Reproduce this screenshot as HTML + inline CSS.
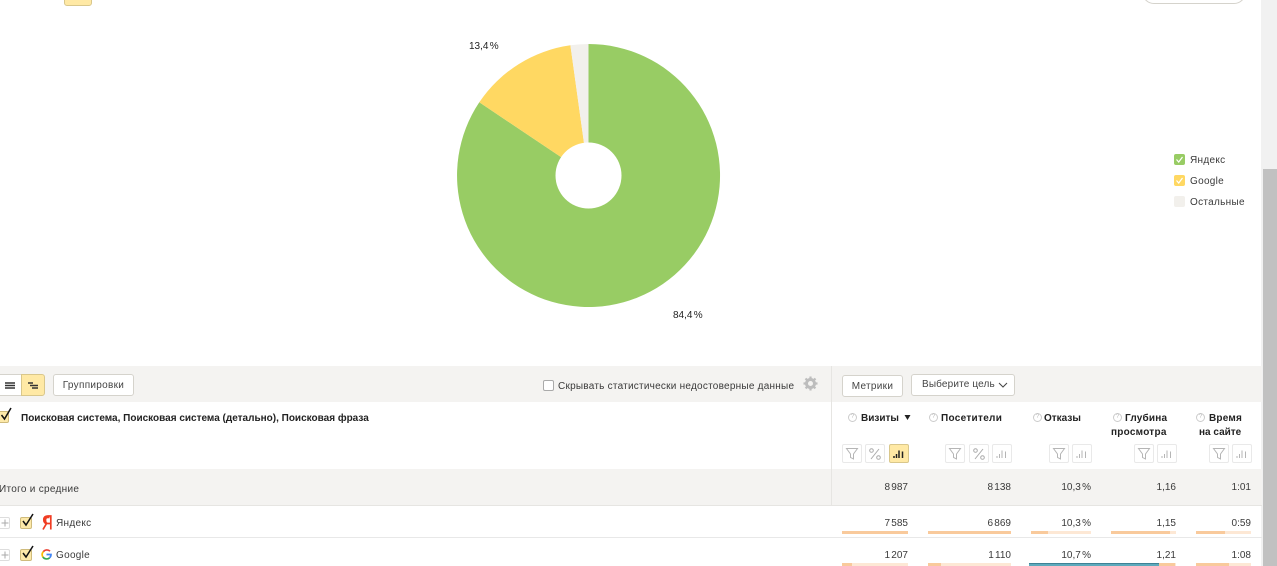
<!DOCTYPE html>
<html><head><meta charset="utf-8">
<style>
html,body{margin:0;padding:0;width:1277px;height:566px;overflow:hidden;background:#fff}
body{position:relative;font-family:"Liberation Sans",sans-serif;font-size:10px;color:#3a3a3a;letter-spacing:.3px}
.a{position:absolute}
.t{position:absolute;white-space:nowrap;line-height:12px}
.r{position:absolute;white-space:nowrap;line-height:12px;text-align:right;width:80px;letter-spacing:0;word-spacing:-1.5px}
.b{font-weight:bold;color:#222;font-size:10px;letter-spacing:.2px}
.btn{position:absolute;box-sizing:border-box;background:#fff;border:1px solid #d5d3cc;border-radius:3px;text-align:center;color:#444}
.ic{position:absolute;box-sizing:border-box;width:20px;height:19px;top:444px;border:1px solid #e9e9e9;border-radius:2px;background:#fff}
.ic svg{position:absolute;left:0;top:0}
.bar{position:absolute;height:3px;background:#fde8d5}
.bar i{display:block;height:3px;background:#f9ca9c}
.q{position:absolute;box-sizing:border-box;width:9px;height:9px;border:1px solid #ccc;border-radius:50%;top:413px;font-size:6px;line-height:7px;text-align:center;color:#bbb;letter-spacing:0}
.cb{position:absolute;box-sizing:border-box;width:12px;height:12px;background:#fde9a9;border:1px solid #cfbb7c;border-radius:2px}
</style></head><body>

<!-- top fragments -->
<div class="a" style="left:64px;top:-10px;width:28px;height:16px;box-sizing:border-box;background:#ffe9a5;border:1px solid #d9c78b;border-radius:3px"></div>
<div class="a" style="left:1142px;top:-20px;width:104px;height:24px;box-sizing:border-box;background:#fff;border:1px solid #d5d3cc;border-radius:12px"></div>

<!-- scrollbar -->
<div class="a" style="left:1261px;top:0;width:16px;height:566px;background:#f1f1f1"></div>
<div class="a" style="left:1263px;top:169px;width:14px;height:397px;background:#c1c1c1"></div>

<!-- pie -->
<svg class="a" style="left:0;top:0" width="1261" height="360">
<path d="M588.500 175.500V44A131.500 131.500 0 1 1 479.300 102.300Z" fill="#98cc64"/>
<path d="M588.500 175.500L479.300 102.300A131.500 131.500 0 0 1 570.400 45.300Z" fill="#ffd862"/>
<path d="M588.500 175.500L570.400 45.300A131.500 131.500 0 0 1 588.500 44Z" fill="#f2f0ec"/>
<circle cx="588.500" cy="175.500" r="33" fill="#fff"/>
</svg>
<div class="t" style="left:469px;top:41px;color:#222;letter-spacing:0;word-spacing:-1.500px">13,4 %</div>
<div class="t" style="left:673px;top:310px;color:#222;letter-spacing:0;word-spacing:-1.500px">84,4 %</div>

<!-- legend -->
<svg class="a" style="left:1174px;top:154px" width="11" height="53">
<rect width="11" height="11" rx="2" fill="#98cc64"/><path d="M2.500 5.500L4.700 8 8.500 3" fill="none" stroke="#fff" stroke-width="1.200"/>
<rect y="21" width="11" height="11" rx="2" fill="#ffd862"/><path d="M2.500 26.500L4.700 29 8.500 24" fill="none" stroke="#fff" stroke-width="1.200"/>
<rect y="42" width="11" height="11" rx="2" fill="#f2f0ec"/>
</svg>
<div class="t" style="left:1190px;top:155px">Яндекс</div>
<div class="t" style="left:1190px;top:176px">Google</div>
<div class="t" style="left:1190px;top:197px">Остальные</div>

<!-- toolbar -->
<div class="a" style="left:0;top:366px;width:1262px;height:36px;background:#f4f3f1"></div>
<div class="a" style="left:831px;top:366px;width:1px;height:139px;background:#e6e5e2"></div>

<div class="a" style="left:-6px;top:374px;width:28px;height:22px;box-sizing:border-box;background:#fff;border:1px solid #d5d3cc;border-radius:3px 0 0 3px"></div>
<svg class="a" style="left:5px;top:382px" width="10" height="7"><path d="M0 1H10M0 3.500H10M0 6H10" stroke="#333" stroke-width="1.400"/></svg>
<div class="a" style="left:21px;top:374px;width:24px;height:22px;box-sizing:border-box;background:#ffe9a5;border:1px solid #d9c78b;border-radius:0 3px 3px 0"></div>
<svg class="a" style="left:28px;top:382px" width="10" height="7"><path d="M0 1H5M2 3.500H10M4 6H10" stroke="#333" stroke-width="1.400"/></svg>
<div class="btn" style="left:53px;top:374px;width:81px;height:22px;line-height:21px">Группировки</div>

<div class="a" style="left:543px;top:380px;width:11px;height:11px;box-sizing:border-box;background:#fff;border:1px solid #aaa;border-radius:2px"></div>
<div class="t" style="left:558px;top:381px;letter-spacing:.24px">Скрывать статистически недостоверные данные</div>
<svg class="a" style="left:803px;top:376px" width="15" height="15" viewBox="0 0 15 15"><circle cx="7.500" cy="7.500" r="4" fill="none" stroke="#bdbdbd" stroke-width="3"/><path d="M7.500 0.500V14.500M0.500 7.500H14.500M2.500 2.500L12.500 12.500M12.500 2.500L2.500 12.500" stroke="#bdbdbd" stroke-width="2.200" stroke-dasharray="2.500 9"/></svg>

<div class="btn" style="left:842px;top:375px;width:61px;height:22px;line-height:21px">Метрики</div>
<div class="btn" style="left:911px;top:374px;width:104px;height:22px;line-height:20px;text-align:left;padding-left:10px;letter-spacing:.15px">Выберите цель</div>
<svg class="a" style="left:998px;top:382px" width="10" height="7"><path d="M1 1L5 5 9 1" fill="none" stroke="#444" stroke-width="1"/></svg>

<!-- header row -->
<div class="cb" style="left:-3px;top:411px"></div>
<svg class="a" style="left:0;top:406px" width="14" height="15"><path d="M1.500 9L4.500 13 11 2" fill="none" stroke="#111" stroke-width="1.500"/></svg>
<div class="t b" style="left:21px;top:413px;letter-spacing:0">Поисковая система, Поисковая система (детально), Поисковая фраза</div>

<div class="q" style="left:848px">?</div><div class="t b" style="left:861px;top:413px;letter-spacing:0">Визиты</div>
<svg class="a" style="left:904px;top:414px" width="7" height="7"><path d="M.5 1H6.500L3.500 6Z" fill="#222"/></svg>
<div class="q" style="left:929px">?</div><div class="t b" style="left:941px;top:413px;letter-spacing:.3px">Посетители</div>
<div class="q" style="left:1033px">?</div><div class="t b" style="left:1044px;top:413px;letter-spacing:0">Отказы</div>
<div class="q" style="left:1113px">?</div><div class="t b" style="left:1125px;top:413px">Глубина</div>
<div class="t b" style="left:1111px;top:427px;letter-spacing:.25px">просмотра</div>
<div class="q" style="left:1196px">?</div><div class="t b" style="left:1209px;top:413px">Время</div>
<div class="t b" style="left:1199px;top:427px;letter-spacing:0">на сайте</div>

<!-- column icons -->
<div class="ic" style="left:842px"><svg width="18" height="17"><path d="M3.500 3.500H14.500L10.500 9V14L7.500 12.500V9Z" fill="none" stroke="#b5b5b5"/></svg></div>
<div class="ic" style="left:865px"><svg width="18" height="17"><path d="M5 14L13 4" stroke="#aaa"/><circle cx="5.500" cy="5.500" r="1.800" fill="none" stroke="#aaa"/><circle cx="12.500" cy="12.500" r="1.800" fill="none" stroke="#aaa"/></svg></div>
<div class="ic" style="left:889px;background:#ffe9a5;border-color:#d9c78b"><svg width="18" height="17"><path d="M4 13V11M6.500 13V9M9 13V5.500M12.500 13V6.500" stroke="#222" stroke-width="1.500"/></svg></div>

<div class="ic" style="left:945px"><svg width="18" height="17"><path d="M3.500 3.500H14.500L10.500 9V14L7.500 12.500V9Z" fill="none" stroke="#b5b5b5"/></svg></div>
<div class="ic" style="left:969px"><svg width="18" height="17"><path d="M5 14L13 4" stroke="#aaa"/><circle cx="5.500" cy="5.500" r="1.800" fill="none" stroke="#aaa"/><circle cx="12.500" cy="12.500" r="1.800" fill="none" stroke="#aaa"/></svg></div>
<div class="ic" style="left:992px"><svg width="18" height="17"><path d="M4 13V11M6.500 13V9M9 13V5.500M12.500 13V6.500" stroke="#b5b5b5"/></svg></div>

<div class="ic" style="left:1049px"><svg width="18" height="17"><path d="M3.500 3.500H14.500L10.500 9V14L7.500 12.500V9Z" fill="none" stroke="#b5b5b5"/></svg></div>
<div class="ic" style="left:1072px"><svg width="18" height="17"><path d="M4 13V11M6.500 13V9M9 13V5.500M12.500 13V6.500" stroke="#b5b5b5"/></svg></div>

<div class="ic" style="left:1134px"><svg width="18" height="17"><path d="M3.500 3.500H14.500L10.500 9V14L7.500 12.500V9Z" fill="none" stroke="#b5b5b5"/></svg></div>
<div class="ic" style="left:1157px"><svg width="18" height="17"><path d="M4 13V11M6.500 13V9M9 13V5.500M12.500 13V6.500" stroke="#b5b5b5"/></svg></div>

<div class="ic" style="left:1209px"><svg width="18" height="17"><path d="M3.500 3.500H14.500L10.500 9V14L7.500 12.500V9Z" fill="none" stroke="#b5b5b5"/></svg></div>
<div class="ic" style="left:1232px"><svg width="18" height="17"><path d="M4 13V11M6.500 13V9M9 13V5.500M12.500 13V6.500" stroke="#b5b5b5"/></svg></div>

<!-- total row -->
<div class="a" style="left:0;top:469px;width:1262px;height:36px;background:#f4f3f1;border-bottom:1px solid #e6e5e2"></div>
<div class="a" style="left:831px;top:469px;width:1px;height:36px;background:#e6e5e2"></div>
<div class="t" style="left:-1px;top:484px">Итого и средние</div>
<div class="r" style="left:828px;top:482px">8 987</div>
<div class="r" style="left:931px;top:482px">8 138</div>
<div class="r" style="left:1011px;top:482px">10,3 %</div>
<div class="r" style="left:1096px;top:482px">1,16</div>
<div class="r" style="left:1171px;top:482px">1:01</div>

<!-- row Яндекс -->
<div class="a" style="left:0;top:537px;width:1262px;height:1px;background:#e8e8e8"></div>
<div class="a" style="left:-4px;top:517px;width:14px;height:12px;box-sizing:border-box;border:1px solid #ddd;border-radius:2px;background:#fff"></div>
<svg class="a" style="left:1px;top:519px" width="8" height="8"><path d="M4 0.500V7.500M0.500 4H7.500" stroke="#aaa"/></svg>
<div class="cb" style="left:20px;top:517px"></div>
<svg class="a" style="left:21px;top:512px" width="14" height="15"><path d="M2 9L5 13 12 2" fill="none" stroke="#111" stroke-width="1.500"/></svg>
<svg class="a" style="left:42px;top:515px" width="10" height="15"><path d="M8.800 14.500V1H5.800C3 1 1.800 2.500 1.800 4.700 1.800 6.700 2.800 8 4.300 8.800L1 14.500M8.500 8.500H5.500C4 8.500 3.500 6.500 3.500 4.800 3.500 3.200 4.300 2.400 5.800 2.400H7.500" fill="none" stroke="#f03d23" stroke-width="1.700"/></svg>
<div class="t" style="left:56px;top:518px">Яндекс</div>
<div class="r" style="left:828px;top:518px">7 585</div>
<div class="r" style="left:931px;top:518px">6 869</div>
<div class="r" style="left:1011px;top:518px">10,3 %</div>
<div class="r" style="left:1096px;top:518px">1,15</div>
<div class="r" style="left:1171px;top:518px">0:59</div>
<div class="bar" style="left:842px;top:531px;width:66px"><i style="width:66px"></i></div>
<div class="bar" style="left:928px;top:531px;width:83px"><i style="width:83px"></i></div>
<div class="bar" style="left:1031px;top:531px;width:60px"><i style="width:17px"></i></div>
<div class="bar" style="left:1111px;top:531px;width:65px"><i style="width:59px"></i></div>
<div class="bar" style="left:1196px;top:531px;width:55px"><i style="width:29px"></i></div>

<!-- row Google -->
<div class="a" style="left:-4px;top:549px;width:14px;height:12px;box-sizing:border-box;border:1px solid #ddd;border-radius:2px;background:#fff"></div>
<svg class="a" style="left:1px;top:551px" width="8" height="8"><path d="M4 0.500V7.500M0.500 4H7.500" stroke="#aaa"/></svg>
<div class="cb" style="left:20px;top:549px"></div>
<svg class="a" style="left:21px;top:544px" width="14" height="15"><path d="M2 9L5 13 12 2" fill="none" stroke="#111" stroke-width="1.500"/></svg>
<svg class="a" style="left:41px;top:549px" width="11" height="11" viewBox="0 0 11 11" fill="none" stroke-width="1.700">
<path d="M9 2.200A4.500 4.500 0 0 0 2.300 2.700" stroke="#ea4335"/>
<path d="M2.300 2.700A4.500 4.500 0 0 0 1.900 8" stroke="#fbbc05"/>
<path d="M1.900 8A4.500 4.500 0 0 0 8.700 8.700" stroke="#34a853"/>
<path d="M8.700 8.700A4.500 4.500 0 0 0 10 5.500H5.500" stroke="#4285f4"/>
</svg>
<div class="t" style="left:56px;top:550px">Google</div>
<div class="r" style="left:828px;top:550px">1 207</div>
<div class="r" style="left:931px;top:550px">1 110</div>
<div class="r" style="left:1011px;top:550px">10,7 %</div>
<div class="r" style="left:1096px;top:550px">1,21</div>
<div class="r" style="left:1171px;top:550px">1:08</div>
<div class="bar" style="left:842px;top:563px;width:66px"><i style="width:10px"></i></div>
<div class="bar" style="left:928px;top:563px;width:83px"><i style="width:13px"></i></div>
<div class="bar" style="left:1111px;top:563px;width:65px"><i style="width:64px"></i></div>
<div class="bar" style="left:1196px;top:563px;width:55px"><i style="width:33px"></i></div>
<div class="a" style="left:1029px;top:563px;width:130px;height:3px;background:#5daabc;border-top:1px solid #3f8296;box-sizing:border-box"></div>

</body></html>
